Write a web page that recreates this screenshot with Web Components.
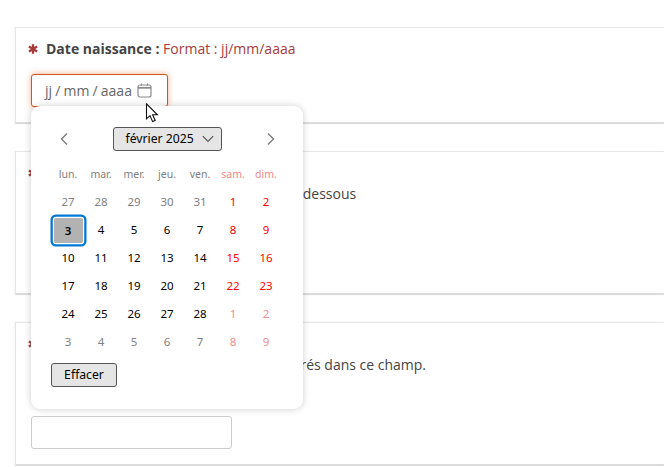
<!DOCTYPE html>
<html lang="fr"><head><meta charset="utf-8"><title>Date</title>
<style>
html,body{margin:0;padding:0;height:467px;overflow:hidden;background:#fff}
body{font:14px/20px "Open Sans",sans-serif;color:#444}
</style></head><body>
<form-page>
  <form-card h="97">
    <req-label><b>Date naissance :</b>&nbsp;<span style="color:#a83a3a">Format : jj/mm/aaaa</span></req-label>
    <date-field></date-field>
  </form-card>
  <form-card h="144">
    <req-label></req-label>
    <help-line offset="257">ci-dessous</help-line>
  </form-card>
  <form-card h="144">
    <req-label></req-label>
    <help-line offset="248">entrés dans ce champ.</help-line>
    <text-box></text-box>
  </form-card>
</form-page>
<script>
function def(name, html, init){
  customElements.define(name, class extends HTMLElement{
    connectedCallback(){
      if(this.shadowRoot) return;
      const r=this.attachShadow({mode:'open'});
      r.innerHTML=html;
      if(init) init.call(this,r);
    }
  });
}
def('form-page',`<style>:host{display:flex;flex-direction:column;gap:27px;padding:27px 0 0 15px;width:664px;box-sizing:border-box}</style><slot></slot>`);
def('form-card',`<style>:host{display:block;box-sizing:border-box;border:1px solid #e7e7e7;border-right:0;border-bottom:2px solid #dcdcdc;box-shadow:-1px 0 2px rgba(0,0,0,.05);padding:11px 0 0 15px;background:#fff}</style><slot></slot>`,
 function(){this.style.height=this.getAttribute('h')+'px';});
def('req-label',`<style>:host{display:flex;align-items:center;height:20px;margin-left:-3px}svg{flex:none;width:10px;height:10px;margin-right:8px}</style>
<svg viewBox="0 0 10 10"><g stroke="#a83a3a" stroke-width="2.3"><path d="M5 .2V9.800M.9 2.600l8.200 4.800M.9 7.400l8.200-4.800"/></g></svg><span><slot></slot></span>`);
def('help-line',`<style>:host{display:block;height:20px;margin-top:1px;margin-bottom:1px}</style><slot></slot>`,
 function(){this.style.paddingLeft=this.getAttribute('offset')+'px';});
def('text-box',`<style>:host{display:block;box-sizing:border-box;width:201px;height:33px;border:1px solid #ccc;border-radius:3px;background:#fff;margin-top:41px}</style>`);
def('date-field',`<style>
:host{display:block;position:relative;margin-top:15px;width:137px;height:33px}
.box{box-sizing:border-box;width:137px;height:33px;border:1px solid #d4541c;border-radius:3px;box-shadow:0 0 6px rgba(226,110,50,.55);display:flex;align-items:center;padding:0 0 0 13px;color:#666;font-size:14px;white-space:pre;gap:5px;background:#fff}
.box span{word-spacing:-.5px}
svg{flex:none}
cal-popup{position:absolute;left:0;top:32px;z-index:2}
.cur{position:absolute;left:114px;top:29px;z-index:3}
</style>
<div class="box"><span>jj / mm / aaaa</span>
<svg width="15" height="15" viewBox="0 0 15 15" fill="none" stroke="#8a8a8a"><rect x="1" y="2" width="13" height="12" rx="2" stroke-width="1.200"/><path d="M1 4.800h13" stroke-width="1.800"/><path d="M4.500 .6v2M10.500 .6v2" stroke-width="1.200"/></svg></div>
<cal-popup></cal-popup>
<svg class="cur" width="14" height="20" viewBox="0 0 14 20"><path d="M1.500 .8V15.800L5 12.600 7.600 18.600 10.200 17.400 7.600 11.800H12.400Z" fill="#fff" stroke="#111" stroke-width="1.100"/></svg>`);
def('cal-popup',`<style>
:host{display:block;box-sizing:border-box;width:272px;height:303px;background:#fff;border-radius:9px;box-shadow:0 0 7px rgba(0,0,0,.2);padding:21px 0 0 20.500px;font-family:"Noto Sans","Open Sans",sans-serif;color:#000}
.head{display:flex;align-items:center;justify-content:space-between;height:24px;width:231px;box-sizing:border-box;padding:0 6px}
.sel{box-sizing:border-box;width:109px;height:24px;background:#e5e5e5;border:1px solid #555;border-radius:3px;display:flex;align-items:center;justify-content:space-between;padding:0 7px 0 12px;font-size:12.200px}
.grid{display:grid;grid-template-columns:repeat(7,33px);grid-auto-rows:28px;margin-top:9px;justify-items:center;align-items:center;font-size:11.500px}
.grid span{display:block;line-height:28px}
.wd{color:#808080;font-size:10.500px}
.wd.we{color:#f58a8a}
.o{color:#808080}
.we{color:#f00}
.o.we{color:#f58a8a}
.grid .sel-day{box-sizing:border-box;width:29px;height:25px;line-height:25px;text-align:center;background:#b2b2b2;border-radius:2px;box-shadow:0 0 0 1.200px #fff,0 0 0 3.500px #0078d4;font-weight:600}
.clear{box-sizing:border-box;display:block;margin:7px 0 0 -.500px;width:66px;height:24px;background:#e5e5e5;border:1px solid #555;border-radius:3px;font:12.200px/22px "Noto Sans","Open Sans",sans-serif;text-align:center;color:#000;padding:0}
</style>
<div class="head">
<svg width="12" height="16" viewBox="0 0 12 16" fill="none" stroke="#777" stroke-width="1.300"><path d="M9 2.500 3.500 8 9 13.500"/></svg>
<div class="sel"><span>février 2025</span><svg width="12" height="8" viewBox="0 0 12 8" fill="none" stroke="#555" stroke-width="1.200"><path d="M.8 1.200 6 6.400l5.200-5.200"/></svg></div>
<svg width="12" height="16" viewBox="0 0 12 16" fill="none" stroke="#777" stroke-width="1.300"><path d="M3 2.500 8.500 8 3 13.500"/></svg>
</div>
<div class="grid"></div>
<button class="clear" type="button">Effacer</button>`,function(r){
  const g=r.querySelector('.grid');
  const wd=['lun.','mar.','mer.','jeu.','ven.','sam.','dim.'];
  let h='';
  wd.forEach((d,i)=>h+=`<span class="wd${i>4?' we':''}">${d}</span>`);
  const days=[27,28,29,30,31];
  for(let d=1;d<=28;d++)days.push(d);
  for(let d=1;d<=9;d++)days.push(d);
  days.forEach((d,i)=>{
    const other=i<5||i>=33, we=i%7>4;
    let c=(other?'o ':'')+(we?'we':'');
    if(i===7)c='sel-day';
    h+=`<span class="${c}">${d}</span>`;
  });
  g.innerHTML=h;
});
</script>
</body></html>
